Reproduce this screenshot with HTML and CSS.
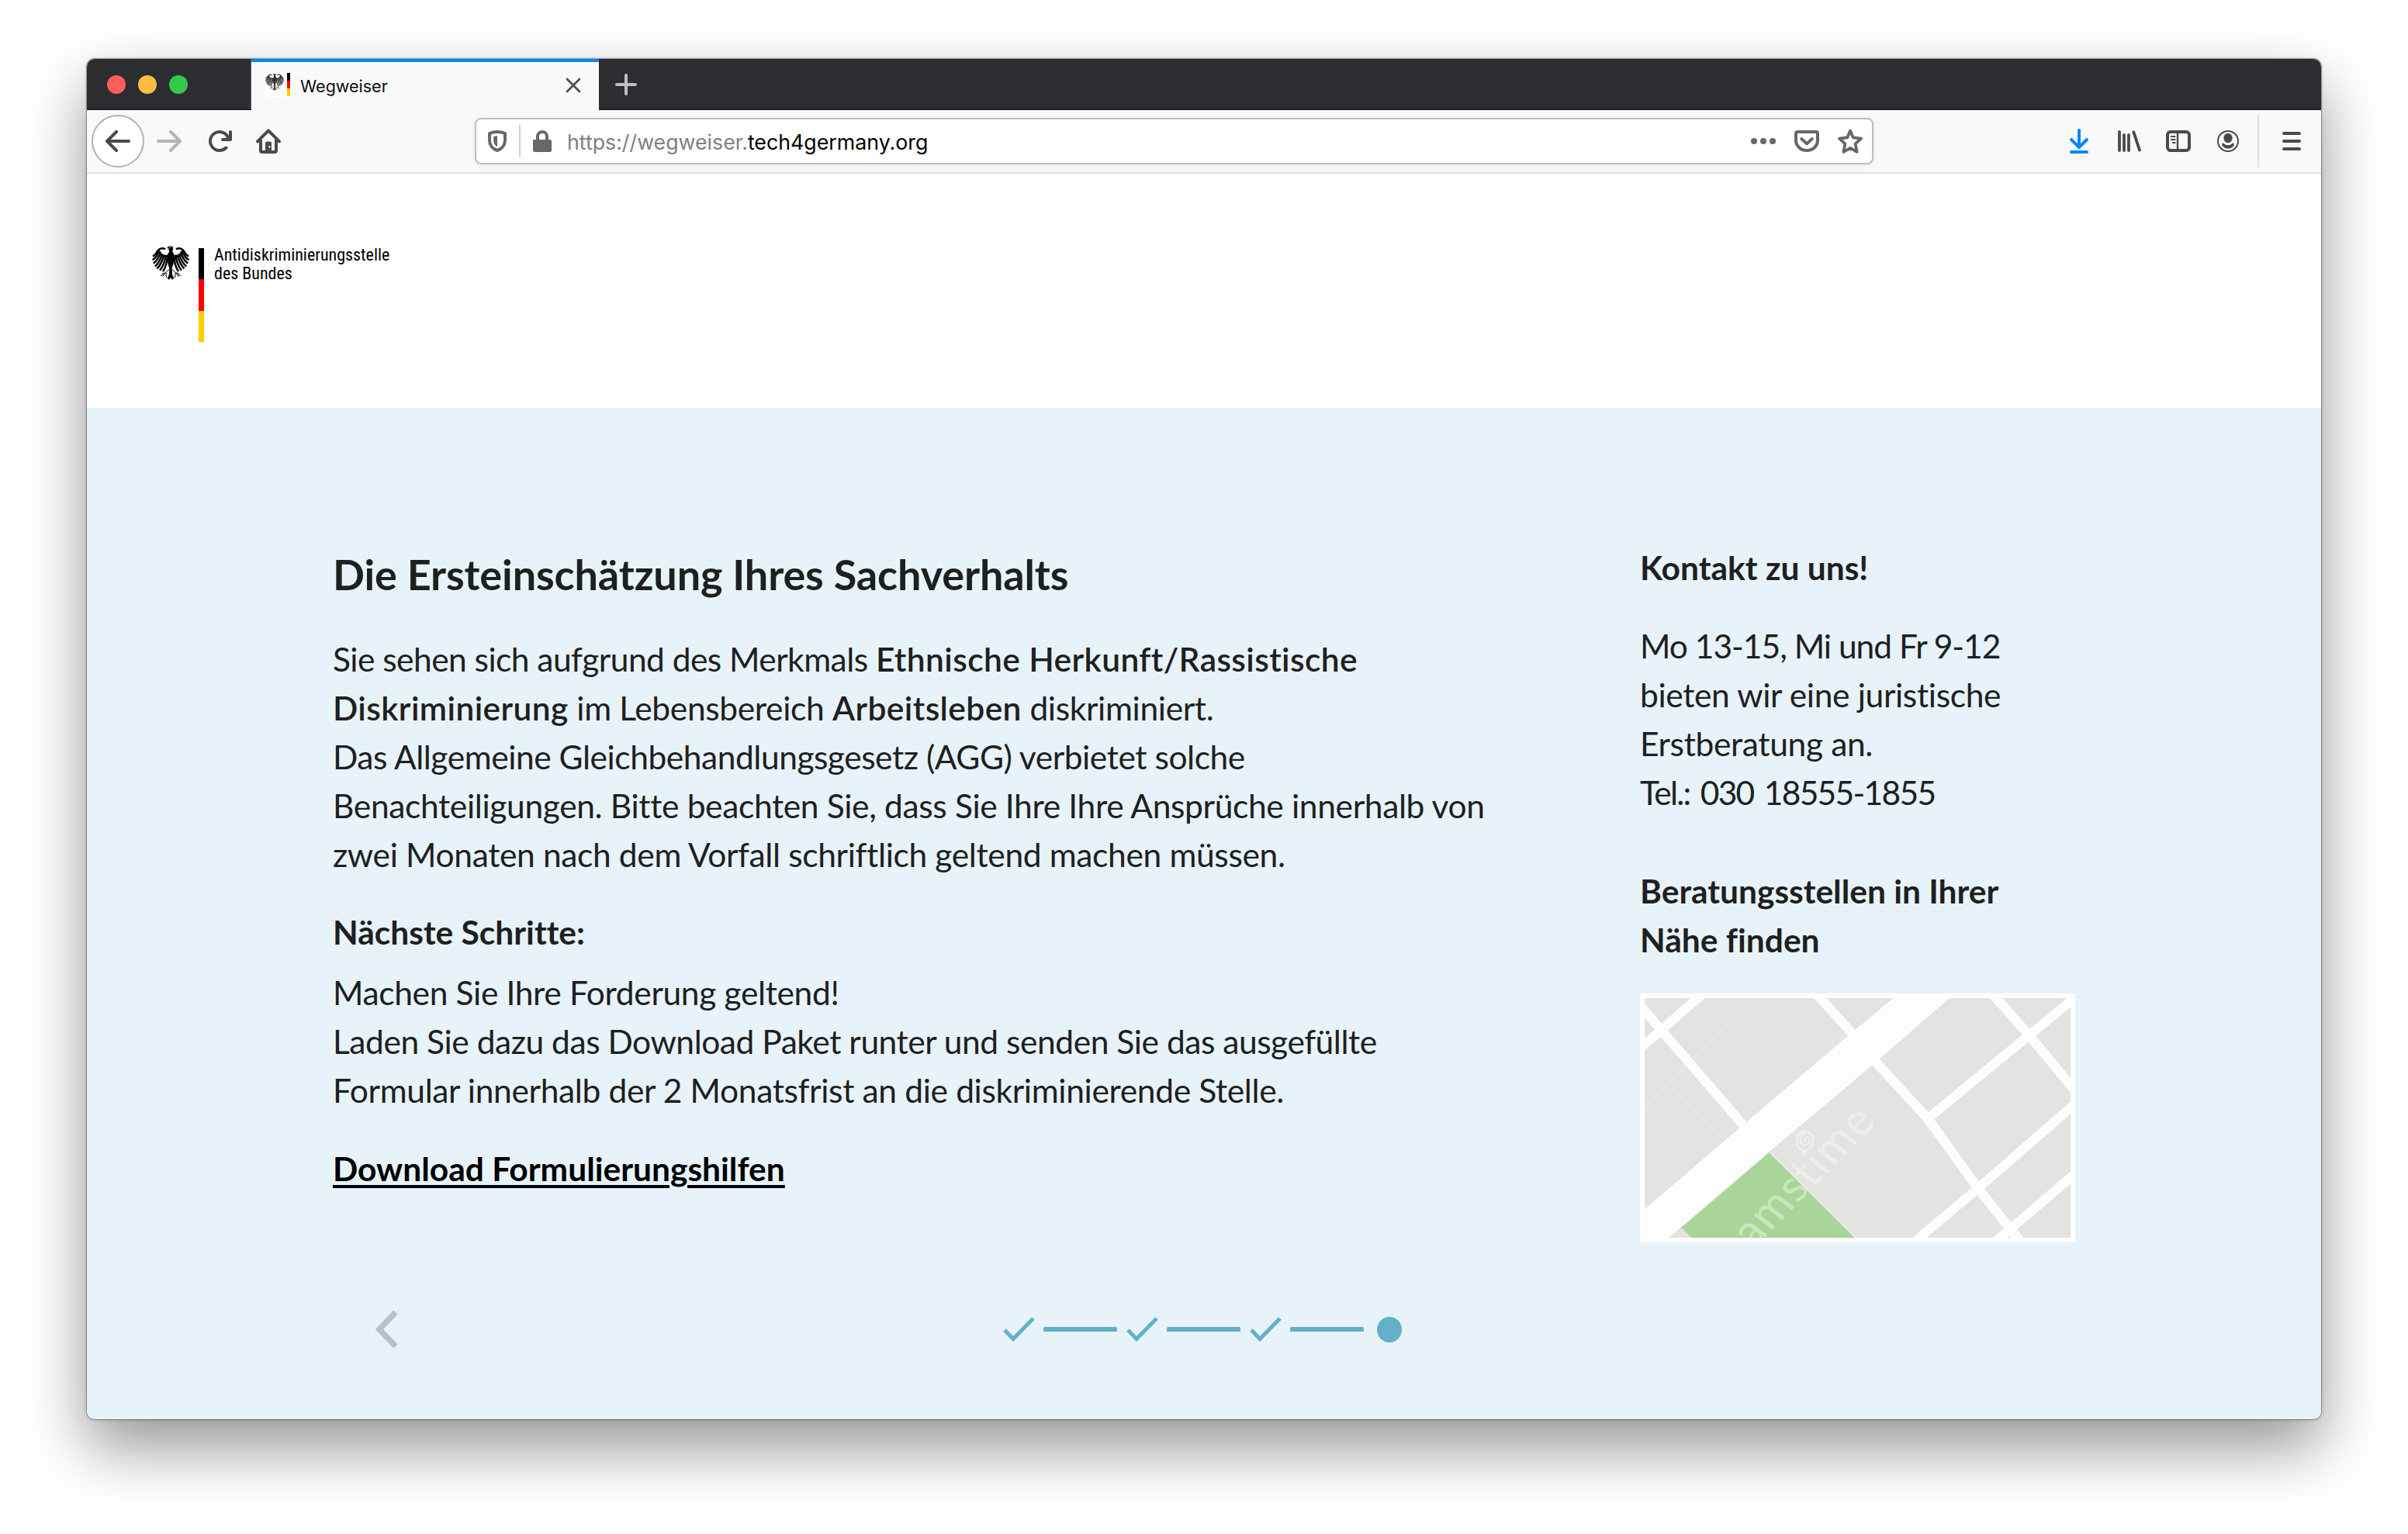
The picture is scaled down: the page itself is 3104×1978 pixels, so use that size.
FILE: index.html
```html
<!DOCTYPE html>
<html lang="de">
<head>
<meta charset="utf-8">
<title>Wegweiser</title>
<link rel="stylesheet" href="styles.css">
</head>
<body>
<svg class="defs" width="0" height="0" aria-hidden="true">
  <symbol id="eagle" viewBox="18 24 144 136">
    <g id="wing" fill="none" stroke="#000" stroke-width="7.5" stroke-linecap="butt">
      <path d="M69 37C56 29 42 36 36 48C32 56 27 62 20 64"/>
      <path d="M45 38C40 58 32 73 19 79"/>
      <path d="M50 46C46 66 37 82 23 92"/>
      <path d="M56 54C52 74 43 92 29 104"/>
      <path d="M63 60C59 80 51 98 37 113"/>
      <path d="M70 63C68 84 60 104 48 120"/>
      <path d="M77 65C76 88 70 108 60 124" />
      <path d="M44 44C46 60 60 66 88 62" stroke-width="7"/>
      <path d="M84 116L70 129L57 132M71 129L58 144M72 130L73 148M64 135L50 140" stroke-width="3"/>
    </g>
    <use href="#wing" transform="matrix(-1 0 0 1 180 0)"/>
    <path d="M79 27L92 25Q101 27 99 36L97 46Q106 58 103 76Q102 96 95 112L96 136L103 150L96 156L90 148L84 156L77 150L84 136L85 112Q78 96 77 76Q74 58 84 48L84 40L76 40L86 35L76 33Z"/>
    <path d="M84 30L92 29" stroke="#fff" stroke-width="2"/>
  </symbol>
</svg>

<div class="window">
  <div class="tabbar">
    <div class="lights"><i class="red"></i><i class="yellow"></i><i class="green"></i></div>
    <div class="tab">
      <div class="favicon">
        <svg width="24" height="24"><use href="#eagle" opacity=".8"/></svg>
        <span class="flag flag-small"><i></i><i></i><i></i></span>
      </div>
      <span class="tab-title">Wegweiser</span>
      <svg class="tab-close" width="20" height="20" viewBox="0 0 20 20"><path d="M2 2l16 16M18 2L2 18" fill="none" stroke="#4a4a4b" stroke-width="2.6" stroke-linecap="round"/></svg>
    </div>
    <svg class="tab-new" width="28" height="28" viewBox="0 0 28 28"><path d="M14 2v24M2 14h24" stroke="#bfbfc0" stroke-width="4" stroke-linecap="round"/></svg>
  </div>

  <div class="toolbar">
    <div class="back"><svg class="ic" viewBox="0 0 16 16"><path d="M15 7H3.414l4.293-4.293a1 1 0 1 0-1.414-1.414l-6 6a1 1 0 0 0 0 1.414l6 6a1 1 0 0 0 1.414-1.414L3.414 9H15a1 1 0 0 0 0-2z"/></svg></div>
    <svg class="ic forward" viewBox="0 0 16 16"><path d="M1 7h11.586L8.293 2.707a1 1 0 1 1 1.414-1.414l6 6a1 1 0 0 1 0 1.414l-6 6a1 1 0 0 1-1.414-1.414L12.586 9H1a1 1 0 0 1 0-2z"/></svg>
    <svg class="ic reload" viewBox="0 0 16 16"><path d="M15 1a1 1 0 0 0-1 1v2.418A6.995 6.995 0 1 0 8 15a6.954 6.954 0 0 0 4.95-2.05 1 1 0 0 0-1.414-1.414A5.019 5.019 0 1 1 12.549 6H10a1 1 0 0 0 0 2h5a1 1 0 0 0 1-1V2a1 1 0 0 0-1-1z"/></svg>
    <svg class="ic home" viewBox="0 0 16 16"><path d="M1 8.2L8 1.2l7 7M3 7.5V14a1 1 0 0 0 1 1h8a1 1 0 0 0 1-1V7.500" fill="none" stroke="#4a4a4b" stroke-width="2" stroke-linecap="round" stroke-linejoin="round"/><path d="M6 15V9.300a1 1 0 0 1 1-1h2a1 1 0 0 1 1 1V15z"/><rect x="8.200" y="11" width="1" height="1.300" fill="#f9f9fa"/></svg>

    <div class="urlbar">
      <svg class="ic g" viewBox="0 0 16 16"><path d="M8 2C9.900 2 11.600 2.400 13 3V7.500C13 10.500 11 13 8 14C5 13 3 10.500 3 7.500V3C4.400 2.400 6.100 2 8 2Z" fill="none" stroke="#676767" stroke-width="2" stroke-linejoin="round"/><path d="M8 4.600V11.600C6.400 10.800 5.600 9.400 5.600 7.500V5C6.300 4.700 7.200 4.600 8 4.600Z"/></svg>
      <span class="url-sep"></span>
      <svg class="ic g" viewBox="0 0 16 16"><path d="M5 8V5a3 3 0 0 1 6 0v3" fill="none" stroke="#676767" stroke-width="2"/><rect x="2" y="7" width="12" height="8" rx="1"/></svg>
      <span class="url">https://wegweiser.<b>tech4germany.org</b></span>
      <svg class="ic g dots" viewBox="0 0 16 16"><circle cx="2" cy="8" r="2"/><circle cx="8" cy="8" r="2"/><circle cx="14" cy="8" r="2"/></svg>
      <svg class="ic g pocket" viewBox="0 0 16 16"><path d="M2 2h12a1 1 0 0 1 1 1v4.500a7 6.500 0 0 1-14 0V3a1 1 0 0 1 1-1z" fill="none" stroke="#676767" stroke-width="2"/><path d="M4.600 6.500L8 9.700l3.400-3.200" fill="none" stroke="#676767" stroke-width="2" stroke-linecap="round" stroke-linejoin="round"/></svg>
      <svg class="ic g" viewBox="0 0 16 16"><path d="M8 1.300L9.900 5.700L15 6.300L11.300 9.700L12.300 14.900L8 12.400L3.700 14.900L4.700 9.700L1 6.300L6.100 5.700Z" fill="none" stroke="#676767" stroke-width="1.900" stroke-linejoin="round"/></svg>
    </div>

    <div class="tools">
      <svg class="ic" viewBox="0 0 16 16"><path d="M8 1v11M3 7l5 5 5-5M3 15h10" fill="none" stroke="#0a84ff" stroke-width="2" stroke-linecap="round" stroke-linejoin="round"/></svg>
      <svg class="ic" viewBox="0 0 16 16"><path d="M2 2v12M5 4v10M8 4v10M11.200 2.200l3.800 11.600" fill="none" stroke="#4a4a4b" stroke-width="1.900" stroke-linecap="round"/></svg>
      <svg class="ic" viewBox="0 0 16 16"><rect x="1" y="2" width="14" height="12" rx="2" fill="none" stroke="#4a4a4b" stroke-width="2"/><path d="M7.500 2v12" stroke="#4a4a4b" stroke-width="1.200"/><path d="M3.400 5h2.400M3.400 7h2.400M4.400 9h1.400" stroke="#4a4a4b" stroke-width="1" stroke-linecap="round"/></svg>
      <svg class="ic" viewBox="0 0 16 16"><circle cx="8" cy="8" r="6.500" fill="none" stroke="#4a4a4b" stroke-width="1"/><ellipse cx="8" cy="6" rx="2.800" ry="3.100"/><path d="M4.300 9.300Q3.800 10.500 4.600 11.400Q6 12.900 8 12.900T11.400 11.400Q12.200 10.500 11.700 9.300Q11 9.100 10.500 9.700Q9.500 10.600 8 10.600T5.500 9.700Q5 9.100 4.300 9.300Z"/></svg>
    </div>
    <span class="tool-sep"></span>
    <svg class="ic" viewBox="0 0 16 16"><rect x="2" y="2" width="12" height="2" rx="1"/><rect x="2" y="7" width="12" height="2" rx="1"/><rect x="2" y="12" width="12" height="2" rx="1"/></svg>
  </div>

  <header class="site-header">
    <svg width="48" height="45"><use href="#eagle"/></svg>
    <span class="flag"><i></i><i></i><i></i></span>
    <p class="agency">Antidiskriminierungsstelle<br>des Bundes</p>
  </header>

  <main>
    <div class="columns">
      <section>
        <h1>Die Ersteinschätzung Ihres Sachverhalts</h1>
        <p class="intro"><span class="tighter">Sie sehen sich aufgrund des Merkmals <strong>Ethnische Herkunft/Rassistische</strong></span><br>
        <strong>Diskriminierung</strong> im Lebensbereich <strong>Arbeitsleben</strong> diskriminiert.<br>
        <span class="tight">Das Allgemeine Gleichbehandlungsgesetz (AGG) verbietet solche</span><br>
        Benachteiligungen. Bitte beachten Sie, dass Sie Ihre Ihre Ansprüche innerhalb von<br>
        zwei Monaten nach dem Vorfall schriftlich geltend machen müssen.</p>
        <h2 class="next">Nächste Schritte:</h2>
        <p class="steps-text">Machen Sie Ihre Forderung geltend!<br>
        <span class="tight">Laden Sie dazu das Download Paket runter und senden Sie das ausgefüllte</span><br>
        Formular innerhalb der 2 Monatsfrist an die diskriminierende Stelle.</p>
        <a class="download">Download Formulierungshilfen</a>
      </section>
      <aside>
        <h2>Kontakt zu uns!</h2>
        <p class="contact"><span class="hours">Mo 13-15, Mi und Fr 9-12</span><br>bieten wir eine juristische<br>Erstberatung an.<br><span class="phone">Tel.: 030 18555-1855</span></p>
        <h2 class="places">Beratungsstellen in Ihrer<br>Nähe finden</h2>
        <svg class="map" viewBox="53 51 1459 927" preserveAspectRatio="none">
          <rect x="53" y="51" width="1459" height="927" fill="#e3e3e1"/>
          <g fill="none" stroke="#e6e6e4" stroke-width="10"><path d="M440 30L53 475M145 400L320 590M1200 70L930 370M1512 610L1400 740"/></g>
          <g fill="none" stroke="#fdfdfc" stroke-width="34">
            <path d="M10 42L110 175L395 548M290 -4L110 175L20 262M620 8L770 195M838 290L1025 520L1197 790L1350 1006M1025 515L1370 195L1550 28M1230 16L1370 195L1550 440M1550 438L1197 785L960 1010M1550 708L1310 940L1240 1006"/>
          </g>
          <path d="M905 51H1097L828 315L480 645L135 978H53V868L405 527L770 178Z" fill="#fdfdfd"/>
          <path d="M480 648L775 978H215L178 940Z" fill="#a9d698"/>
          <path d="M178 940L215 978H135Z" fill="#e4e4da"/>
          <path d="M484 648L778 978" stroke="#ecebea" stroke-width="7"/>
          <path d="M606 607Q596 600 604 590Q618 588 618 605Q612 626 594 618Q578 600 592 578Q614 560 630 588Q636 624 604 642Q570 640 574 594Q580 566 606 562" fill="none" stroke="#efefee" stroke-width="7"/>
          <g transform="translate(425 1022) rotate(-49)"><text class="watermark" x="0" y="0" textLength="650">amstime</text></g>
        </svg>
      </aside>
    </div>

    <nav class="pager">
      <svg class="prev" width="30" height="50" viewBox="0 0 30 50"><path d="M26 3L5 25L26 47" fill="none" stroke="#b9c0c9" stroke-width="7.500"/></svg>
      <div class="progress">
        <svg class="check" viewBox="0 0 42 32"><path d="M2 17L13 28.500L39 2" fill="none" stroke="#63b0c9" stroke-width="5"/></svg>
        <i class="bar"></i>
        <svg class="check" viewBox="0 0 42 32"><path d="M2 17L13 28.500L39 2" fill="none" stroke="#63b0c9" stroke-width="5"/></svg>
        <i class="bar"></i>
        <svg class="check" viewBox="0 0 42 32"><path d="M2 17L13 28.500L39 2" fill="none" stroke="#63b0c9" stroke-width="5"/></svg>
        <i class="bar"></i>
        <i class="dot"></i>
      </div>
    </nav>
  </main>
</div>
</body>
</html>
```
FILE: styles.css
```css
* { box-sizing: border-box; }
body { margin: 0; padding: 76px 112px 0; background: #fff; font-family: Lato, sans-serif; height: 1978px; overflow: hidden; }
h1, h2, p { margin: 0; }
svg { display: block; flex: none; }
.defs { position: absolute; }

.window { height: 1754px; display: flex; flex-direction: column; border-radius: 10px; overflow: hidden; background: #fff; box-shadow: 0 0 0 1px rgba(0,0,0,.28), 0 0 4px rgba(0,0,0,.25), 0 36px 80px rgba(0,0,0,.42); }

/* Browser tabs */
.tabbar { height: 66px; flex: none; display: flex; background: #2c2d31; border-bottom: 1px solid #1b1a20; }
.lights { width: 212px; padding: 21px 0 0 26px; display: flex; gap: 16px; border-right: 1px solid #5b5b5e; }
.lights i { width: 24px; height: 24px; border-radius: 50%; }
.red { background: #ff5f58; }
.yellow { background: #ffbd40; }
.green { background: #35c94b; }
.tab { width: 448px; height: 66px; background: #f9f9fa; border-top: 4px solid #0a84ff; display: flex; align-items: flex-start; padding: 14px 23px 0 18px; }
.favicon { width: 32px; height: 32px; display: flex; gap: 4px; background: #fff; }
.tab-title { font: 21.5px/32px Inter, sans-serif; color: #0c0c0d; margin: 1px auto 0 13px; }
.tab-close { margin-top: 6px; }
.tab-new { margin: 19px 0 0 21px; }

.flag { display: flex; flex-direction: column; width: 7px; height: 121px; }
.flag i { flex: 1; background: #000; }
.flag i:nth-child(2) { background: #f00; }
.flag i:nth-child(3) { background: #fc0; }
.flag-small { width: 4px; height: 30px; }

/* Browser toolbar */
.toolbar { height: 82px; flex: none; display: flex; align-items: center; background: #f9f9fa; border-bottom: 2px solid #e0e0e1; padding: 0 22px 0 6px; }
.ic { width: 32px; height: 32px; fill: #4a4a4b; }
.ic.g { fill: #676767; }
.back { width: 68px; height: 68px; border: 2px solid #b1b1b1; border-radius: 50%; background: #fff; display: grid; place-items: center; }
.ic.forward { margin-left: 16px; fill: #b4b4b5; }
.reload { margin-left: 33px; }
.home { margin-left: 31px; }
.urlbar { margin-left: 250px; width: 1803px; height: 60px; border: 2px solid #bdbdbe; border-radius: 8px; background: #fff; display: flex; align-items: center; padding: 0 12px 0 11px; box-shadow: 0 2px 8px rgba(0,0,0,.06); }
.url-sep { width: 2px; height: 42px; background: #d2d2d3; margin: 0 12px; }
.url { font: 26.75px/40px Inter, sans-serif; color: #808080; margin: 2px auto 0 16px; }
.url b { font-weight: 400; color: #000; }
.pocket { margin: 0 24px; }
.tools { display: flex; gap: 32px; margin-left: auto; }
.tool-sep { width: 2px; height: 68px; background: #dcdcdd; margin: 0 26px 0 22px; }

/* Page */
.site-header { height: 302px; flex: none; display: flex; padding: 93px 84px; }
.site-header .flag { margin: 3px 13px 0 12px; }
.agency { font: 22px/24px Roboto, sans-serif; font-stretch: 75%; color: #000; }

main { flex: 1; background: #e7f3f8; color: #1e201f; padding: 174px 317px 0; font-size: 42.5px; line-height: 63px; letter-spacing: -.35px; white-space: nowrap; font-variant-ligatures: none; }
.columns { display: grid; grid-template-columns: 1500px 561px; column-gap: 185px; }
h1 { font-size: 54px; line-height: 82px; font-weight: 700; letter-spacing: -.13px; }
h2, .download { font-size: 42.5px; line-height: 63px; font-weight: 700; letter-spacing: 0; }
strong { font-weight: 600; letter-spacing: .4px; }
.tight { letter-spacing: -.45px; }
.tighter { letter-spacing: -.54px; }
.intro { margin-top: 36px; }
.next { margin-top: 37px; }
.steps-text { margin-top: 15px; }
.download { display: inline-block; margin-top: 38px; color: #000; text-decoration: underline; text-decoration-thickness: 4px; text-underline-offset: 5px; }
.contact { margin-top: 38px; }
.hours { letter-spacing: -1px; }
.phone { letter-spacing: -1.7px; word-spacing: 4px; }
.places { margin-top: 64px; }
.map { width: 561px; height: 321px; margin-top: 38px; border: 6px solid #fff; }
.watermark { font: 400 168px Lato, sans-serif; fill: #fff; fill-opacity: .38; }

.pager { margin-top: 82px; height: 60px; display: flex; align-items: center; padding-left: 55px; }
.progress { display: flex; align-items: center; margin-left: 779px; }
.check { width: 42px; height: 32px; }
.bar { width: 95px; height: 6px; border-radius: 2px 2px 0 0; background: #63b0c9; margin: 0 12px 0 10px; }
.dot { width: 32px; height: 33px; border-radius: 50%; background: #63b0c9; margin-left: 5px; }
```
